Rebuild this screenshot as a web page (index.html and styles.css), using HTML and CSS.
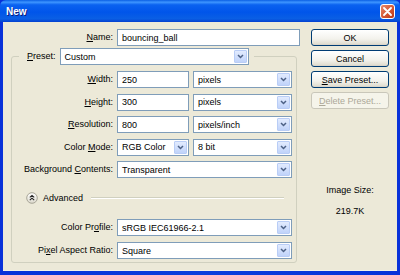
FILE: index.html
```html
<!DOCTYPE html>
<html lang="en">

<head>
    <meta charset="UTF-8">
    <title>New</title>
    <link rel="stylesheet" href="styles.css">
</head>

<body>
    <div class="window">
        <div class="titlebar">
            <span class="title">New</span>
            <span class="closeBtn">
                <svg width="9" height="9" viewBox="0 0 9 9">
                    <path d="M1 1 L8 8 M8 1 L1 8" stroke="#fff" stroke-width="1.8" stroke-linecap="round" />
                </svg>
            </span>
        </div>

        <div class="dialogBody">
            <div class="formCol">
                <div class="nameRow">
                    <label class="lbl"><u>N</u>ame:</label>
                    <input type="text" class="field" value="bouncing_ball">
                </div>

                <fieldset class="group">
                    <legend class="presetRow">
                        <label class="lbl"><u>P</u>reset:</label>
                        <div class="select presetSelect"><span>Custom</span><span class="arrow"><svg width="7" height="5" viewBox="0 0 7 5"><polyline points="1,1 3.5,3.5 6,1" fill="none" stroke="#4D6185" stroke-width="1.5" /></svg></span></div>
                    </legend>

                    <div class="fieldGrid">
                        <label class="lbl"><u>W</u>idth:</label>
                        <input type="text" class="field" value="250">
                        <div class="select"><span>pixels</span><span class="arrow"><svg width="7" height="5" viewBox="0 0 7 5"><polyline points="1,1 3.5,3.5 6,1" fill="none" stroke="#4D6185" stroke-width="1.5" /></svg></span></div>

                        <label class="lbl"><u>H</u>eight:</label>
                        <input type="text" class="field" value="300">
                        <div class="select"><span>pixels</span><span class="arrow"><svg width="7" height="5" viewBox="0 0 7 5"><polyline points="1,1 3.5,3.5 6,1" fill="none" stroke="#4D6185" stroke-width="1.5" /></svg></span></div>

                        <label class="lbl"><u>R</u>esolution:</label>
                        <input type="text" class="field" value="800">
                        <div class="select"><span>pixels/inch</span><span class="arrow"><svg width="7" height="5" viewBox="0 0 7 5"><polyline points="1,1 3.5,3.5 6,1" fill="none" stroke="#4D6185" stroke-width="1.5" /></svg></span></div>

                        <label class="lbl">Color <u>M</u>ode:</label>
                        <div class="select"><span>RGB Color</span><span class="arrow"><svg width="7" height="5" viewBox="0 0 7 5"><polyline points="1,1 3.5,3.5 6,1" fill="none" stroke="#4D6185" stroke-width="1.5" /></svg></span></div>
                        <div class="select"><span>8 bit</span><span class="arrow"><svg width="7" height="5" viewBox="0 0 7 5"><polyline points="1,1 3.5,3.5 6,1" fill="none" stroke="#4D6185" stroke-width="1.5" /></svg></span></div>

                        <label class="lbl">Background <u>C</u>ontents:</label>
                        <div class="select span2"><span>Transparent</span><span class="arrow"><svg width="7" height="5" viewBox="0 0 7 5"><polyline points="1,1 3.5,3.5 6,1" fill="none" stroke="#4D6185" stroke-width="1.5" /></svg></span></div>
                    </div>

                    <div class="advancedRow">
                        <span class="toggle">
                            <svg width="12" height="12" viewBox="0 0 12 12">
                                <defs>
                                    <linearGradient id="tg" x1="0" y1="0" x2="0" y2="1">
                                        <stop offset="0" stop-color="#ffffff" />
                                        <stop offset="1" stop-color="#dcd9cc" />
                                    </linearGradient>
                                </defs>
                                <circle cx="6" cy="6" r="5.3" fill="url(#tg)" stroke="#a8a597" />
                                <polyline points="3.8,5.4 6,3.4 8.2,5.4" fill="none" stroke="#222" stroke-width="1.1" />
                                <polyline points="3.8,8.2 6,6.2 8.2,8.2" fill="none" stroke="#222" stroke-width="1.1" />
                            </svg>
                        </span>
                        <span>Advanced</span>
                        <span class="rule"></span>
                    </div>

                    <div class="fieldGrid lower">
                        <label class="lbl">Color Pr<u>o</u>file:</label>
                        <div class="select span2"><span>sRGB IEC61966-2.1</span><span class="arrow"><svg width="7" height="5" viewBox="0 0 7 5"><polyline points="1,1 3.5,3.5 6,1" fill="none" stroke="#4D6185" stroke-width="1.5" /></svg></span></div>

                        <label class="lbl">Pi<u>x</u>el Aspect Ratio:</label>
                        <div class="select span2"><span>Square</span><span class="arrow"><svg width="7" height="5" viewBox="0 0 7 5"><polyline points="1,1 3.5,3.5 6,1" fill="none" stroke="#4D6185" stroke-width="1.5" /></svg></span></div>
                    </div>
                </fieldset>
            </div>

            <div class="sideCol">
                <button type="button" class="xpBtn">OK</button>
                <button type="button" class="xpBtn">Cancel</button>
                <button type="button" class="xpBtn"><u>S</u>ave Preset...</button>
                <button type="button" class="xpBtn" disabled><u>D</u>elete Preset...</button>

                <div class="imageSize">
                    <div>Image Size:</div>
                    <div class="sizeValue">219.7K</div>
                </div>
            </div>
        </div>
    </div>
</body>

</html>
```

FILE: styles.css
```css
body {
    margin: 0;
    font-family: "Liberation Sans", Arial, sans-serif;
    font-size: 9px;
    color: #000;
}

u {
    text-decoration: underline;
    text-underline-offset: 1px;
}

.window {
    width: 400px;
    height: 275px;
    display: flex;
    flex-direction: column;
    background: linear-gradient(90deg, #0831D9, #0A3FDD 50%, #0831D9);
}

/* title bar */
.titlebar {
    height: 22px;
    display: flex;
    align-items: center;
    justify-content: space-between;
    padding: 0 5px 0 6px;
    border-radius: 6px 6px 0 0;
    background: linear-gradient(#0A5FE4 0%, #3D95FF 10%, #0A62F0 22%, #0055EA 55%, #0A5FE4 85%, #0440D0 100%);
}

.title {
    color: #fff;
    font-weight: bold;
    font-size: 10px;
    text-shadow: 1px 1px 0 #0A1C7A;
}

.closeBtn {
    width: 15px;
    height: 15px;
    box-sizing: border-box;
    display: flex;
    align-items: center;
    justify-content: center;
    border: 1px solid #fff;
    border-radius: 3px;
    background: linear-gradient(135deg, #E9896A, #D2532F 60%, #B8391C);
}

/* dialog body */
.dialogBody {
    flex: 1;
    display: flex;
    margin: 0 3px 4px 3px;
    padding: 7px 8px 0 8px;
    background-color: #ECE9D8;
    border-bottom: 1px solid #F4F2E8;
}

.formCol {
    width: 289px;
}

.lbl {
    text-align: right;
    white-space: nowrap;
    line-height: 17px;
}

.nameRow {
    display: grid;
    grid-template-columns: 102px 1fr;
    column-gap: 4px;
    height: 17px;
}

.field {
    box-sizing: border-box;
    height: 17px;
    margin: 0;
    padding: 0 4px;
    border: 1px solid #7F9DB9;
    background: #fff;
    font: inherit;
    outline: none;
}

.select {
    box-sizing: border-box;
    height: 17px;
    display: flex;
    align-items: center;
    justify-content: space-between;
    padding: 0 1px 0 4px;
    border: 1px solid #7F9DB9;
    background: #fff;
    white-space: nowrap;
}

.arrow {
    width: 13px;
    height: 13px;
    box-sizing: border-box;
    display: flex;
    align-items: center;
    justify-content: center;
    border: 1px solid #B9CDF6;
    border-radius: 1px;
    background: linear-gradient(#E2EBFE, #C0D3FA);
}

/* group box */
.group {
    margin: 2px 0 0 0;
    padding: 0 4px 3px 0;
    width: 286px;
    box-sizing: border-box;
    border: 1px solid #D0D0BF;
    border-radius: 3px;
}

.presetRow {
    display: flex;
    align-items: center;
    gap: 4px;
    margin-left: 7px;
    padding: 0 5px 0 8px;
}

.presetSelect {
    width: 189px;
}

.fieldGrid {
    display: grid;
    grid-template-columns: 101px 72px 99px;
    grid-auto-rows: 17px;
    column-gap: 4px;
    row-gap: 5.5px;
    margin-top: 6px;
}

.fieldGrid.lower {
    margin-top: 15px;
    row-gap: 6px;
}

.span2 {
    grid-column: span 2;
}

.advancedRow {
    display: flex;
    align-items: center;
    gap: 5px;
    height: 12px;
    margin-top: 14px;
    padding-left: 14px;
}

.toggle {
    display: flex;
}

.rule {
    flex: 1;
    height: 0;
    margin: 0 8px 0 3px;
    border-top: 1px solid #D0D0BF;
    border-bottom: 1px solid #fff;
}

/* buttons column */
.sideCol {
    width: 78px;
    margin-left: 11px;
    display: flex;
    flex-direction: column;
    gap: 4px;
}

.xpBtn {
    height: 17px;
    margin: 0;
    padding: 0;
    border: 1px solid #003C74;
    border-radius: 3px;
    background: linear-gradient(#FFFFFF, #F3F2EC 60%, #E2DFD3 90%, #D6D0C5);
    font: inherit;
    color: #000;
}

.xpBtn:disabled {
    border-color: #C9C7BA;
    background: #F5F4EA;
    color: #ACA899;
}

.imageSize {
    margin-top: 71px;
    text-align: center;
    line-height: 12px;
}

.sizeValue {
    margin-top: 9px;
}
```
